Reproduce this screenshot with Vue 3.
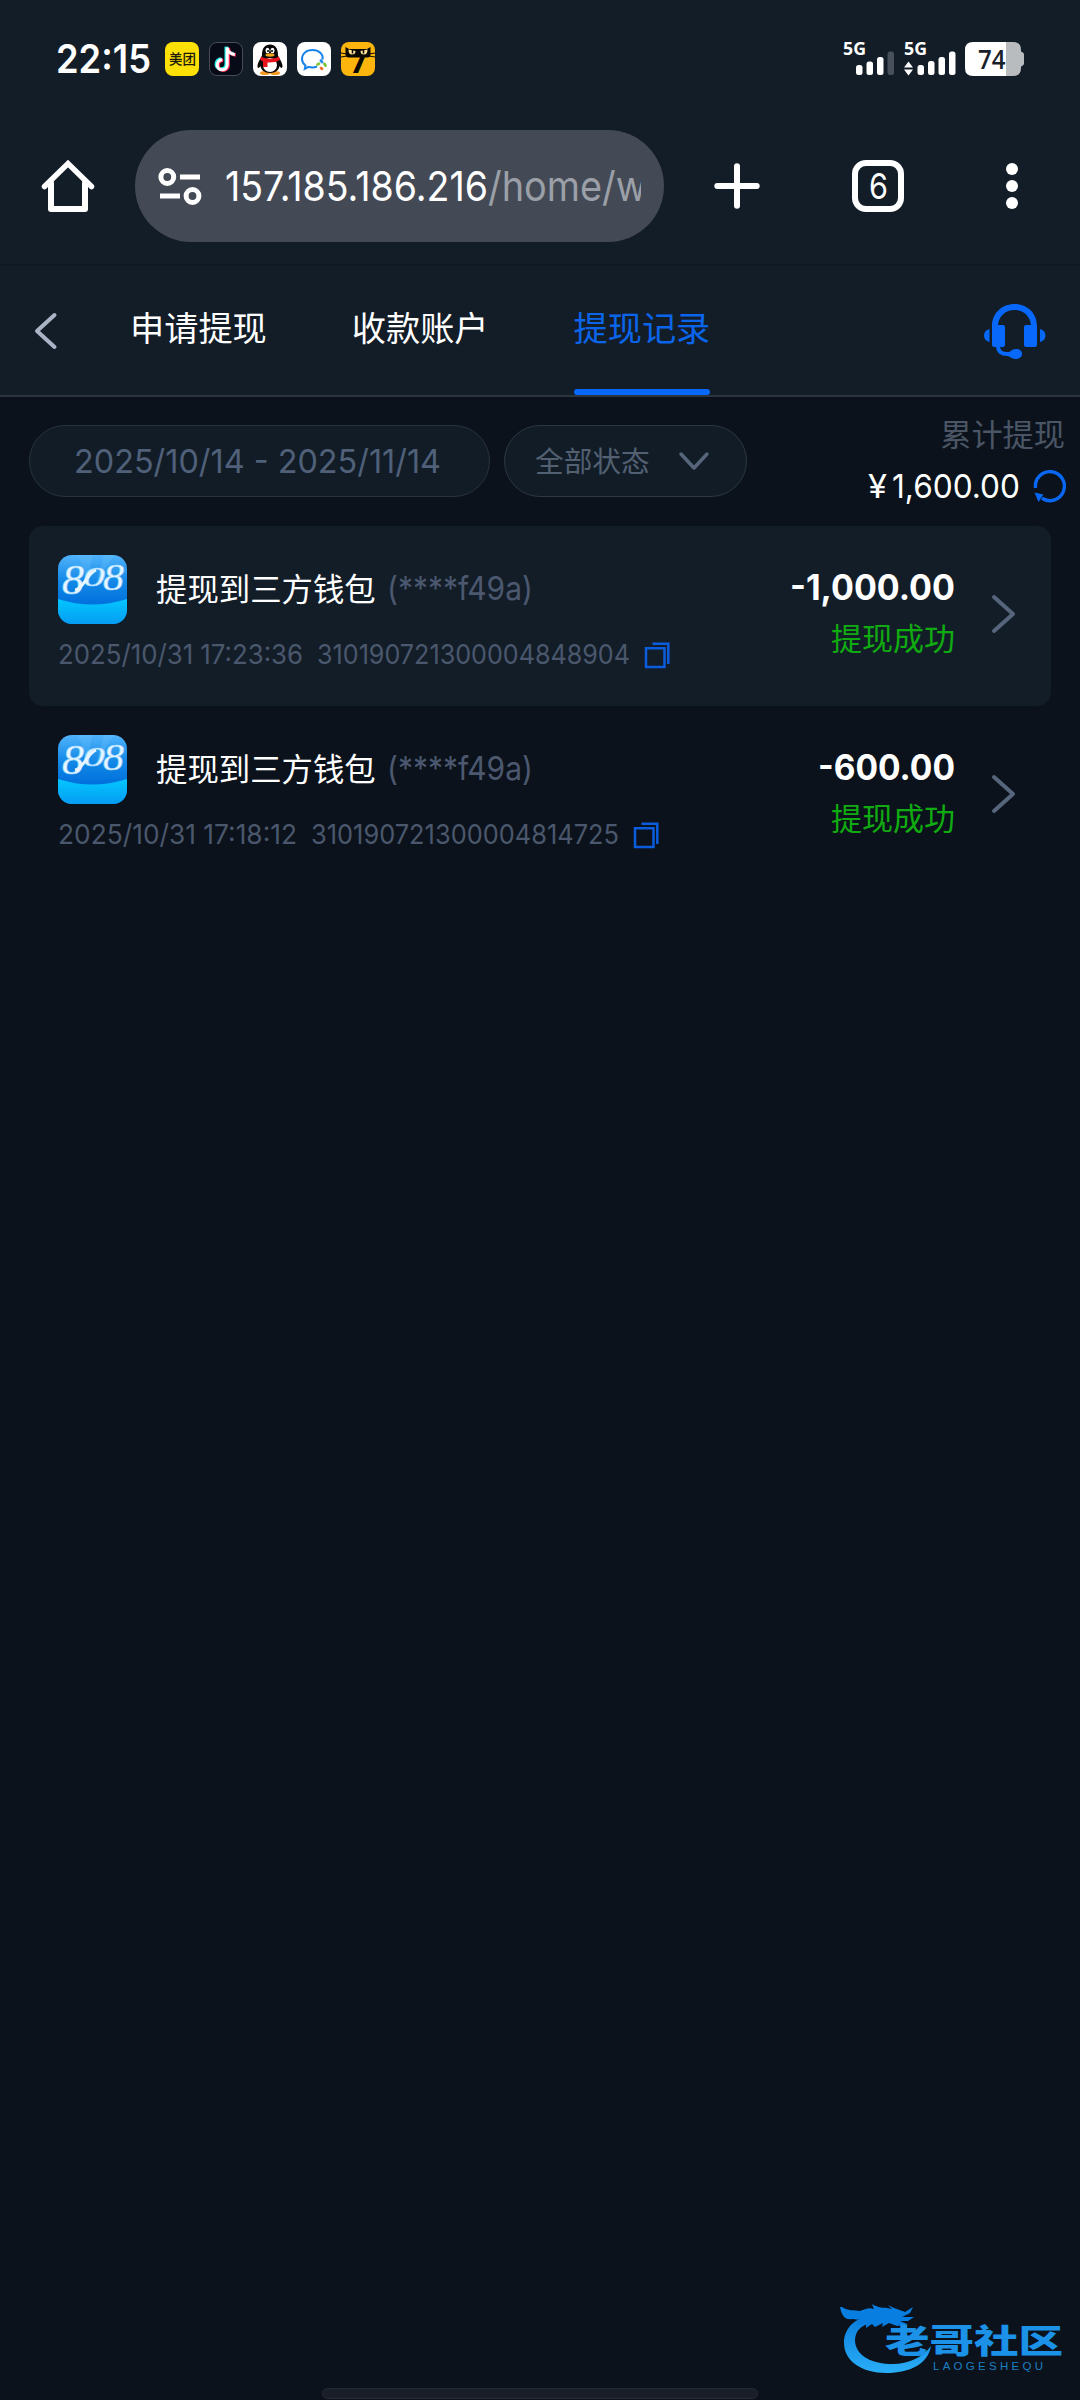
<script setup>
import { ref } from 'vue'

// Condenses or widens a run of text to a given width in pixels.
const vFit = {
  mounted(el, { value }) {
    el.style.display = 'inline-block'
    const natural = el.getBoundingClientRect().width
    el.style.transformOrigin = '0 50%'
    el.style.transform = `scaleX(${value / natural})`
    el.style.marginRight = `${value - natural}px`
  },
}

const tabs = ['申请提现', '收款账户', '提现记录']
const activeTab = ref(2)

const records = [
  { time: '2025/10/31 17:23:36', timeWidth: 245, id: '310190721300004848904', idWidth: 313, amount: '-1,000.00', amountWidth: 165 },
  { time: '2025/10/31 17:18:12', timeWidth: 239, id: '310190721300004814725', idWidth: 308, amount: '-600.00', amountWidth: 137 },
]
</script>

<template>
  <div class="screen">
    <header class="status">
      <span v-fit="95" class="clock">22:15</span>
      <div class="apps">
        <span class="app meituan"><b v-fit="27">美团</b></span>
        <svg class="app" viewBox="0 0 34 34">
          <rect x=".5" y=".5" width="33" height="33" rx="7.5" fill="#070b18" stroke="#4a4c58" />
          <g fill="none" stroke-width="3.4">
            <path d="M17.4 5v17.300a5 5 0 1 1-5-5M17.400 5c.4 4 3.500 6.800 7.600 7" stroke="#25f4ee" transform="translate(-.2 -.3)" />
            <path d="M19.400 6v17.300a5 5 0 1 1-5-5M19.400 6c.4 4 3.500 6.800 7.600 7" stroke="#fe2c55" transform="translate(-.2 0)" />
            <path d="M18.400 5.500v17.300a5 5 0 1 1-5-5M18.400 5.500c.4 4 3.500 6.800 7.600 7" stroke="#fff" stroke-width="3" transform="translate(-.2 0)" />
          </g>
        </svg>
        <svg class="app" viewBox="0 0 34 34">
          <rect width="34" height="34" rx="8" fill="#fff" />
          <ellipse cx="12" cy="31" rx="5" ry="2" fill="#f59a23" /><ellipse cx="22" cy="31" rx="5" ry="2" fill="#f59a23" />
          <path d="M9 13C9 6 12 2.500 17 2.500S25 6 25 13c0 2 4.500 7 4.500 11 0 3-2 2-3 0-.5 4-4 7-9.500 7s-9-3-9.500-7c-1 2-3 3-3 0 0-4 4.500-9 4.500-11Z" fill="#070707" />
          <ellipse cx="17" cy="23" rx="7" ry="7" fill="#fff" />
          <ellipse cx="14.500" cy="8.500" rx="2" ry="2.700" fill="#fff" /><ellipse cx="19.500" cy="8.500" rx="2" ry="2.700" fill="#fff" />
          <circle cx="15" cy="9" r="1" /><circle cx="19" cy="9" r="1" />
          <ellipse cx="17" cy="13" rx="4.500" ry="1.700" fill="#f6a51f" />
          <path d="M8 14.500c5 3 13 3 18 0l1 3.500c-3 2-8 2.600-12.500 2.400V25H10v-5.500L7.300 18Z" fill="#e8121d" />
        </svg>
        <svg class="app" viewBox="0 0 34 34">
          <rect width="34" height="34" rx="8" fill="#fff" />
          <path d="M25.500 17.500C26.500 12 22 8 15.500 8S5 12 5 17c0 3 1.500 5 3.500 6.500l-.7 3.300 3.700-1.900c3 .8 5.500.8 8.500-.4" fill="none" stroke="#1583ea" stroke-width="2" />
          <g stroke-width="2.800" stroke-linecap="round"><path d="m24 18.500 1 1.500" stroke="#2b8cf0" /><path d="m27.500 22 1 1.500" stroke="#74c33b" /><path d="m20.500 22.500 1.500-.8" stroke="#8ac83f" /><path d="m24 26 1 .8" stroke="#f06a2a" /></g>
        </svg>
        <svg class="app" viewBox="0 0 34 34">
          <rect width="34" height="34" rx="8" fill="#fbb50c" />
          <path d="M4.500 5 8 7h18l3.500-2v7q0 3.500-3 3.500H8q-3.500 0-3.500-3.500Z" fill="#090805" />
          <text x="9" y="31" class="seven" textLength="17" lengthAdjust="spacingAndGlyphs">7</text>
          <path d="M7.500 7.500q0 5 3.500 5t3.500-3.500ZM26.500 7.500q0 5-3.500 5t-3.500-3.500Z" fill="#ffe49a" />
          <path d="M11.500 8v3.500M22.500 8v3.500" stroke="#090805" stroke-width="1.500" />
          <path d="m0 11 6 1M0 15l6-1M34 11l-6 1m6 3-6-1" stroke="#090805" />
        </svg>
      </div>
      <div class="radios">
        <svg class="radio" viewBox="0 0 58 40">
          <text x="0" y="15.500" class="net" textLength="23" lengthAdjust="spacingAndGlyphs">5G</text>
          <g fill="#fff"><rect x="13" y="26" width="6.500" height="10" rx="2.500" /><rect x="23.500" y="22.500" width="6.500" height="13.500" rx="2.500" /><rect x="34" y="18" width="6.500" height="18" rx="2.500" /></g>
          <rect x="44.500" y="12.500" width="6.500" height="23.500" rx="2.500" fill="#47505b" />
        </svg>
        <svg class="radio" viewBox="0 0 58 40">
          <text x="0" y="15.500" class="net" textLength="23" lengthAdjust="spacingAndGlyphs">5G</text>
          <path d="m4.500 22.500 4.500 6H0ZM0 30.500h9l-4.500 6Z" fill="#fff" />
          <g fill="#fff"><rect x="13.500" y="26" width="6.500" height="10" rx="2.500" /><rect x="24" y="22" width="6.500" height="14" rx="2.500" /><rect x="34.500" y="18" width="6.500" height="18" rx="2.500" /><rect x="45" y="12.500" width="6.500" height="23.500" rx="2.500" /></g>
        </svg>
        <svg class="battery" viewBox="0 0 60 34">
          <path d="M41 0h7q8 0 8 8v1q0 1 1.500 1.300Q59 11 59 12.500v9q0 1.500-1.500 2.200Q56 24 56 25v1q0 8-8 8h-7Z" fill="#b9bcbf" />
          <path d="M8 0h33v34H8q-8 0-8-8V8q0-8 8-8Z" fill="#fff" />
          <text x="13" y="26.500" class="charge" textLength="27.500" lengthAdjust="spacingAndGlyphs">74</text>
        </svg>
      </div>
    </header>

    <div class="browser">
      <svg class="home" viewBox="0 0 54 54" fill="none" stroke="#fff" stroke-width="6" stroke-linecap="round" stroke-linejoin="round">
        <path d="M3.500 27.500 27 4.500l23.500 23" stroke-linejoin="miter" stroke-width="5.500" /><path d="M10 24v26h34V24" />
      </svg>
      <div class="address">
        <svg class="site" viewBox="0 0 44 38" fill="none" stroke="#fff" stroke-width="5">
          <circle cx="9.300" cy="10" r="6.400" /><path d="M22 10h20M2 29h20" /><circle cx="34.500" cy="29" r="6.400" />
        </svg>
        <div class="url"><span v-fit="263">157.185.186.216</span><span v-fit="168" class="path">/home/wi</span></div>
      </div>
      <svg class="plus" viewBox="0 0 46 46" stroke="#fff" stroke-width="6" stroke-linecap="round"><path d="M23 3.300v39.400M3.300 23h39.400" /></svg>
      <div class="count"><span v-fit="19">6</span></div>
      <svg class="more" viewBox="0 0 14 48" fill="#fff"><circle cx="7" cy="7" r="6" /><circle cx="7" cy="24" r="6" /><circle cx="7" cy="41" r="6" /></svg>
    </div>

    <nav class="nav">
      <svg class="back" viewBox="0 0 24 38" fill="none" stroke="#a9b4c7" stroke-width="4" stroke-linecap="round" stroke-linejoin="round"><path d="M20.500 3 3 19l17.500 16" /></svg>
      <div class="tabs">
        <button v-for="(tab, i) in tabs" :key="tab" class="tab" :class="{ active: i === activeTab }" @click="activeTab = i">{{ tab }}</button>
      </div>
      <svg class="service" viewBox="0 0 64 56" fill="#0768fb">
        <path d="M9 42V23C9 10 19 1 31.500 1S54 10 54 23v19q0 2-2 2H43q-2 0-2-2V24q0-2 2-2h5C47 13 40.500 7 31.500 7S16 13 15 22h5q2 0 2 2v18q0 2-2 2h-9q-2 0-2-2Z" />
        <path d="M6.500 26v13C3 38 1 36 1 32.500S3 27 6.500 26ZM57 26v13c3.500-1 5.500-3 5.500-6.500S60.500 27 57 26Z" />
        <path d="M15 43c0 5 3.500 8 9 8h3" fill="none" stroke="#0768fb" stroke-width="4" /><path d="M24 50c4-1 4-4 9-4 4 0 6 2 6 5s-2.500 5-6.500 5c-4.500 0-5-3-8.500-3Z" />
      </svg>
    </nav>

    <section class="filters">
      <div class="range"><span v-fit="367">2025/10/14 - 2025/11/14</span></div>
      <div class="state">
        <span>全部状态</span>
        <svg viewBox="0 0 32 20" fill="none" stroke="#56657a" stroke-width="3.500" stroke-linecap="round" stroke-linejoin="round"><path d="m3 3 13 14L29 3" /></svg>
      </div>
      <div class="total">
        <div class="total-label">累计提现</div>
        <div class="total-sum">
          <span v-fit="19">¥</span><span v-fit="128" class="sum">1,600.00</span>
          <svg viewBox="0 0 34 34" fill="none" stroke="#0868f5" stroke-width="3.400"><path d="M2.500 19A14.500 14.500 0 1 1 9 29.300" /><path d="m1.500 23.500 9 2L5.500 33Z" fill="#0868f5" stroke="none" /></svg>
        </div>
      </div>
    </section>

    <main class="list">
      <article v-for="r in records" :key="r.id" class="record">
        <div class="info">
          <div class="title">
            <svg class="logo" viewBox="0 0 69 69">
              <defs>
                <linearGradient id="sky" x2="0" y2="1"><stop stop-color="#51b3fb" /><stop offset=".35" stop-color="#168be8" /><stop offset=".7" stop-color="#0071dc" /></linearGradient>
                <linearGradient id="sea" x2="0" y2="1"><stop stop-color="#04c7ff" /><stop offset="1" stop-color="#059cf2" /></linearGradient>
                <clipPath id="tile"><rect width="69" height="69" rx="14" /></clipPath>
              </defs>
              <g clip-path="url(#tile)">
                <rect width="69" height="69" fill="url(#sky)" />
                <path d="M30 28 20 0h14ZM38 28 46 0h10Z" fill="#7bcbff" opacity=".22" />
                <path d="M0 44Q34 55 69 44V69H0Z" fill="url(#sea)" />
              </g>
              <g class="mark">
                <text x="4" y="39" font-size="42" textLength="22" lengthAdjust="spacingAndGlyphs">8</text>
                <text x="25" y="31" font-size="27" textLength="22" lengthAdjust="spacingAndGlyphs">0</text>
                <text x="45" y="35" font-size="37" textLength="21" lengthAdjust="spacingAndGlyphs">8</text>
              </g>
              <path d="M17 35C25 34 29 19 38 15" fill="none" stroke="#e8f6ff" stroke-width="3" />
            </svg>
            <span class="name">提现到三方钱包</span>
            <span v-fit="146" class="mask">(****f49a)</span>
          </div>
          <div class="meta">
            <span v-fit="r.timeWidth">{{ r.time }}</span>
            <span v-fit="r.idWidth" class="id">{{ r.id }}</span>
            <svg class="copy" viewBox="0 0 26 27" fill="none" stroke="#0b5ddd" stroke-width="2.500"><path d="M2 6.300h18.500V25H2Z" /><path d="M8.500 1.700h15.800V22" /></svg>
          </div>
        </div>
        <div class="result">
          <strong v-fit="r.amountWidth">{{ r.amount }}</strong>
          <span>提现成功</span>
        </div>
        <svg class="go" viewBox="0 0 26 40" fill="none" stroke="#56657c" stroke-width="4" stroke-linecap="round" stroke-linejoin="round"><path d="m3 3 19 17L3 37" /></svg>
      </article>
    </main>

    <svg class="watermark" viewBox="0 0 224 74">
      <defs><linearGradient id="wave" x2="0" y2="1"><stop stop-color="#0b7ddc" /><stop offset="1" stop-color="#2aaef8" /></linearGradient></defs>
      <path d="M36 14C16 12 4 25 4 40c0 18 18 30 42 30 24 0 42-9 45-27-9 12-24 19-42 18C29 60 15 51 15 37c0-10 8-17 24-19Z" fill="url(#wave)" />
      <path d="M2 4c6 4 12 3 18 4 5-2 9-4 14-2l-2-5c7 5 14 3 20 5l-4-4c7 4 13 5 17 7l8-5-3 6-8 4h12l-6 4h-8l7 3-10 2-8-3-7 4 1-4-8 4-3-3-6 4v-5l-9 2 4-5-9-1c-5 1-10-1-12-12Z" fill="#087ee0" />
      <text x="45" y="50" class="brand" textLength="178" lengthAdjust="spacingAndGlyphs">老哥社区</text>
      <text x="93" y="66.500" class="brand-sub" textLength="110">LAOGESHEQU</text>
    </svg>
    <div class="gesture"></div>
  </div>
</template>

<style>
body { background: #0b121b; }
</style>

<style scoped>
* { box-sizing: border-box; }
.screen {
  width: 1080px; height: 2400px; overflow: hidden; position: relative;
  background: #0b121b; color: #fff;
  font-family: Inter, "Noto Sans CJK SC", sans-serif;
  white-space: nowrap;
}
svg { display: block; flex: none; overflow: visible; }
.status { height: 118px; background: #131d28; display: flex; align-items: center; padding: 0 56px; }
.clock { font-size: 39px; font-weight: 600; line-height: 48px; flex: none; }
.apps { display: flex; gap: 10px; margin-left: 14px; }
.app { width: 34px; height: 34px; }
.meituan { background: #fde006; border-radius: 8px; color: #1c1a08; display: flex; align-items: center; padding-left: 3.500px; }
.meituan b { font-size: 14px; line-height: 34px; font-weight: 500; }
.seven { font: 900 29px Roboto, sans-serif; fill: #090805; }
.radios { display: flex; margin-left: auto; align-items: flex-start; }
.radio { width: 58px; height: 40px; margin-right: 3px; }
.radio + .radio { margin-right: 3px; }
.battery { width: 60px; height: 34px; margin: 2.500px -1px 0 0; }
.net { font: 700 17px "Open Sans", sans-serif; fill: #fff; }
.charge { font: 600 27px "Open Sans", sans-serif; fill: #18202a; }
.browser { height: 148px; background: #131d28; border-bottom: 2px solid #101821; display: flex; align-items: flex-start; padding: 12px 61px 0 41px; }
.home { width: 54px; height: 54px; margin-top: 29px; }
.address { width: 529px; height: 112px; margin-left: 40px; border-radius: 56px; background: #444a55; display: flex; align-items: center; padding: 0 23px; }
.site { width: 44px; height: 38px; }
.url { flex: 1; height: 60px; line-height: 60px; font-size: 41px; margin-left: 23px; overflow: hidden; display: flex; }
.url span { flex: none; }
.url .path { color: #9b9fa7; }
.plus { width: 46px; height: 46px; margin: 33px 0 0 50px; }
.count { width: 52px; height: 52px; border: 6px solid #fff; border-radius: 14px; margin: 30px 0 0 92px; display: flex; justify-content: center; align-items: center; font-size: 35px; line-height: 40px; font-weight: 400; }
.more { width: 14px; height: 48px; margin: 32px 0 0 auto; }
.nav { height: 131px; background: #131d28; border-bottom: 2px solid #2b3540; display: flex; align-items: center; padding-left: 34px; }
.back { width: 24px; height: 38px; }
.tabs { display: flex; align-self: stretch; gap: 85px; margin-left: 72px; }
.tab { background: none; border: 0; border-bottom: 6px solid transparent; padding: 0 0 3px; color: #fff; font: 400 34.200px/120px "Noto Sans CJK SC", sans-serif; position: relative; }
.tab.active { color: #0b65ea; }
.tab.active::after { content: ""; position: absolute; left: 0; right: 0; bottom: -6px; height: 6px; border-radius: 3px; background: #0768fb; }
.service { width: 64px; height: 56px; margin: 0 33px 0 auto; }
.filters { height: 129px; display: flex; padding: 28px 13px 0 29px; }
.range, .state { height: 72px; border: 1.500px solid #28333f; border-radius: 36px; background: #111c27; color: #506079; display: flex; align-items: center; }
.range { width: 461px; padding-left: 44px; font-size: 33px; }
.state { width: 243px; margin-left: 14px; padding: 0 0 3px 30px; font-size: 28.700px; border-color: #2d3843; color: #526072; }
.state svg { width: 32px; height: 20px; margin: 3px 0 0 28px; }
.total { margin-left: auto; margin-top: -14px; }
.total-label { color: #4a5565; font-size: 31.200px; line-height: 48px; text-align: right; padding-right: 2px; }
.total-sum { display: flex; align-items: center; font-size: 33px; line-height: 50px; margin-top: 2px; }
.total-sum .sum { margin-left: 5px; }
.total-sum svg { width: 34px; height: 34px; margin-left: 13px; }
.list { padding: 0 29px; }
.record { height: 180px; border-radius: 14px; display: flex; padding: 29px 34px 0 29px; }
.record:first-child { background: #131d28; }
.title { display: flex; align-items: center; height: 69px; }
.logo { width: 69px; height: 69px; }
.mark { font-family: "Liberation Serif", serif; font-style: italic; fill: #e8f6ff; stroke: #9cd6ff; stroke-width: .6; }
.name { font-size: 31.400px; font-weight: 400; line-height: 46px; margin-left: 29px; }
.mask { color: #4b586f; font-size: 33px; line-height: 40px; margin: -3px 0 0 11px; }
.meta { display: flex; align-items: center; height: 40px; margin-top: 10px; color: #4a576c; font-size: 27.500px; }
.id { margin-left: 14px; }
.copy { width: 26px; height: 27px; margin-left: 14px; margin-top: 3px; }
.result { margin-left: auto; display: flex; flex-direction: column; align-items: flex-end; }
.result strong { font-size: 35px; font-weight: 700; line-height: 44px; margin-top: 10px; }
.result span { color: #10ab10; font-size: 31px; line-height: 46px; margin-top: 7px; }
.go { width: 26px; height: 40px; margin: 39px 0 0 36px; }
.watermark { position: absolute; left: 840px; top: 2303px; width: 224px; height: 74px; }
.brand { font: 900 33px "Noto Sans CJK SC", sans-serif; fill: #1b91e8; }
.brand-sub { font: 400 11.500px "Liberation Sans", sans-serif; fill: #1b7fc4; }
.gesture { position: absolute; left: 322px; top: 2388px; width: 436px; height: 11px; border-radius: 6px; background: #191e28; border: 1px solid #262b35; }
</style>
